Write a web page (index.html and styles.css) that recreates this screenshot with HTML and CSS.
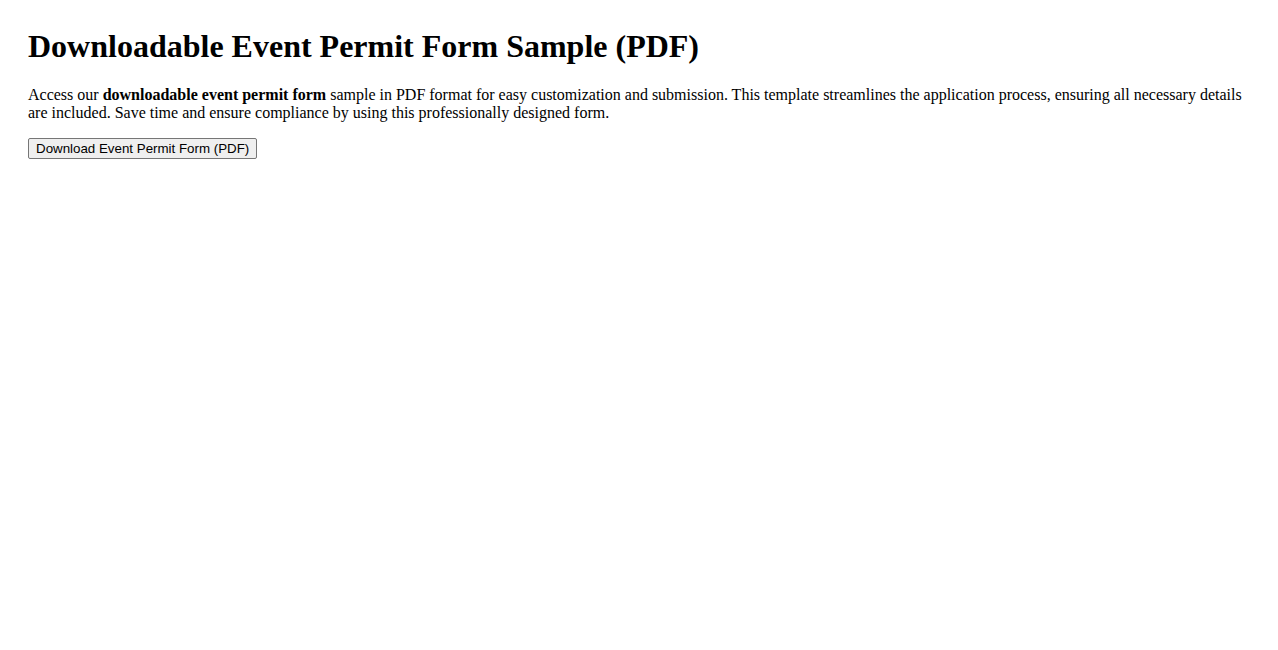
FILE: index.html
```html
<!DOCTYPE html>
<html lang="en">
<head>
<meta charset="utf-8">
<title>Downloadable Event Permit Form Sample (PDF)</title>
<link rel="stylesheet" href="styles.css">
</head>
<body>
<main class="page">
  <h1 class="title">Downloadable Event Permit Form Sample (PDF)</h1>
  <p class="intro">Access our <strong>downloadable event permit form</strong> sample in PDF format for easy customization and submission. This template streamlines the application process, ensuring all necessary details are included. Save time and ensure compliance by using this professionally designed form.</p>
  <button class="download-btn" type="button">Download Event Permit Form (PDF)</button>
</main>
</body>
</html>
```
FILE: styles.css
```css
body {
  margin: 0;
  font-family: "Liberation Serif", "Times New Roman", serif;
  font-size: 16px;
  color: #000;
  background: #fff;
}

.page {
  padding: 28px;
}

.title {
  font-size: 32px;
  font-weight: bold;
  margin: 0 0 21.44px;
}

.intro {
  margin: 16px 0;
  line-height: normal;
}

.download-btn {
  font-family: "Liberation Sans", Arial, sans-serif;
  font-size: 13.333px;
  color: #000;
  background: #efefef;
  border: 1px solid #767676;
  border-radius: 2px;
  padding: 1px 7px;
  height: 21px;
}
```
